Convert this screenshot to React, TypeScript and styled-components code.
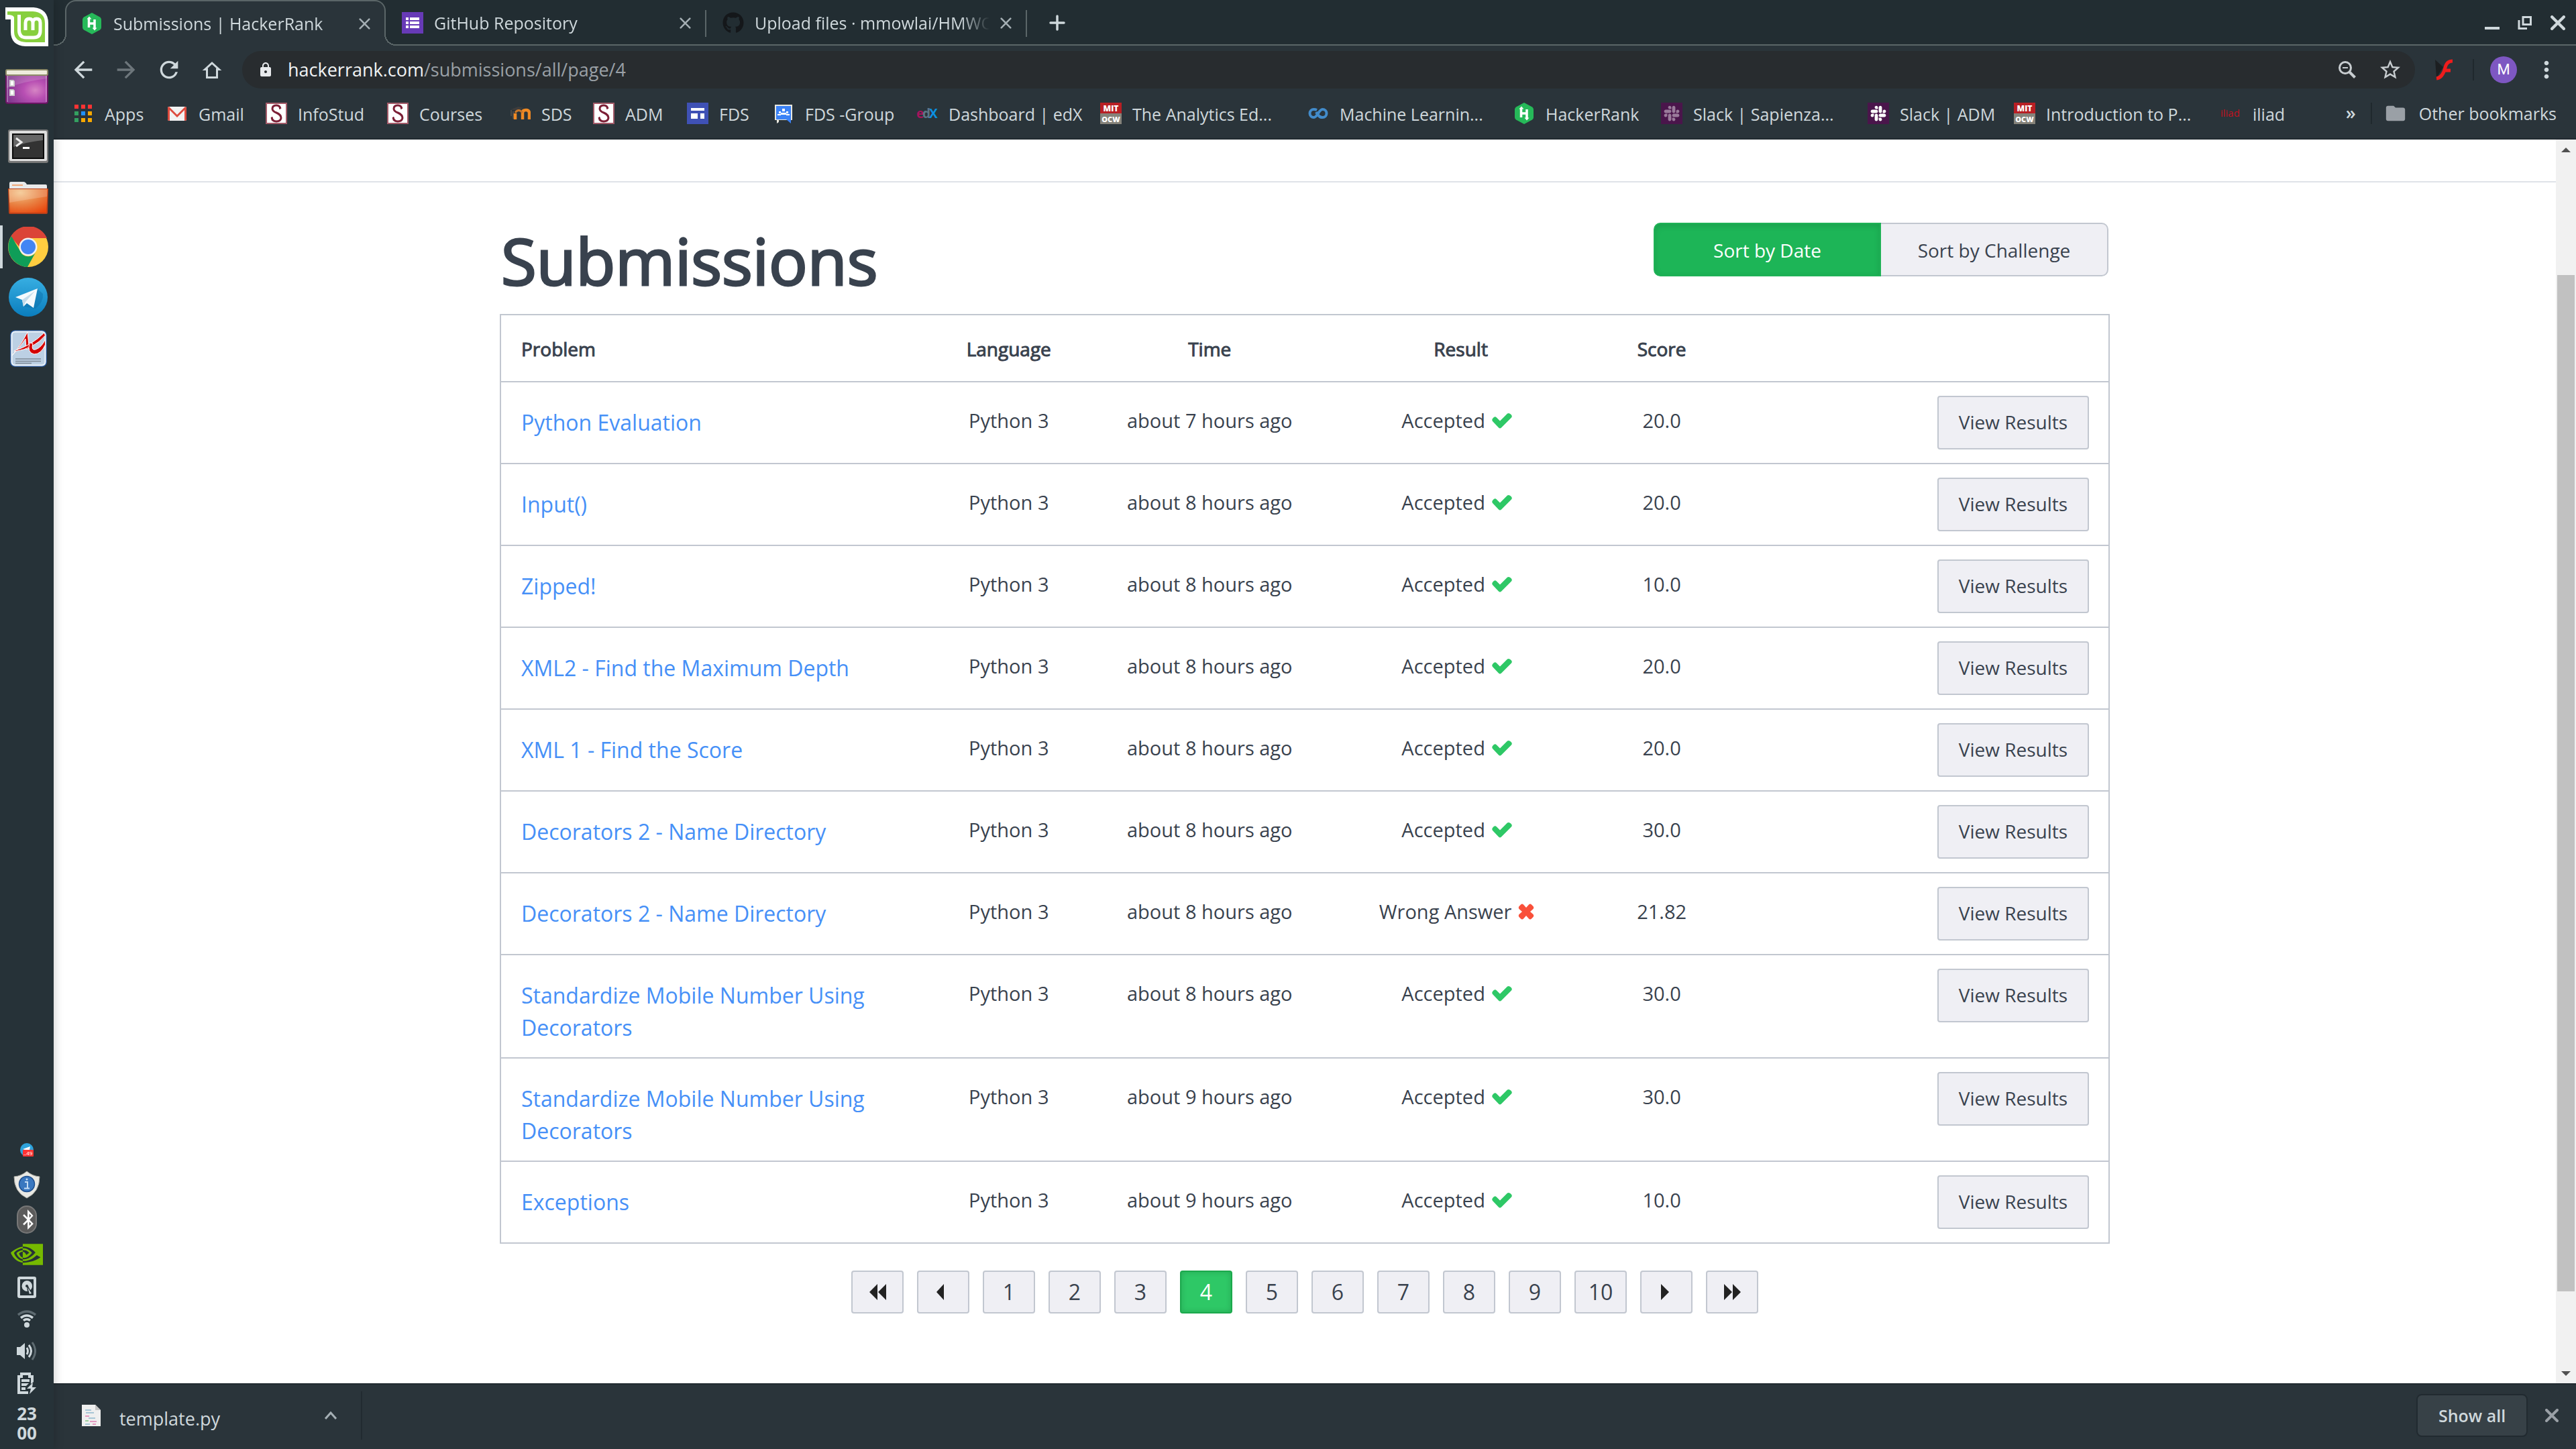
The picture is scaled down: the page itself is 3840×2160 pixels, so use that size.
import React from "react";
import styled, { createGlobalStyle, css } from "styled-components";
import {
  MdArrowBack,
  MdArrowForward,
  MdRefresh,
  MdLock,
  MdStarBorder,
  MdMoreVert,
  MdFolder,
} from "react-icons/md";
import { FaGithub, FaSlack, FaBluetoothB } from "react-icons/fa";
import { SiNvidia } from "react-icons/si";

const c = {
  panel: "#263238",
  strip: "#222d32",
  toolbar: "#2a343a",
  omnibox: "#282c2f",
  line: "#5b6668",
  edge: "#212a30",
  chromeText: "#cfd8dc",
  muted: "#9aa0a6",
  ink: "#39424e",
  border: "#c2c7d0",
  soft: "#efeff4",
  link: "#4690f7",
  green: "#2ec866",
  greenDark: "#1db557",
};

const Global = createGlobalStyle`
  *, *::before, *::after { box-sizing: border-box; }
  body { margin: 0; font-family: "Open Sans", "Noto Sans", sans-serif; background: #fff; }
  button { font: inherit; color: inherit; border: 0; background: none; padding: 0; }
  a { color: inherit; text-decoration: none; }
  svg { display: block; flex: none; }
`;

const Desktop = styled.div`
  display: flex;
  min-height: 100vh;
`;

/* ---------- desktop panel ---------- */

const Panel = styled.nav`
  flex: none;
  width: 80px;
  display: flex;
  flex-direction: column;
  justify-content: space-between;
  background: ${c.panel};
  box-shadow: 0 0 14px rgba(0, 0, 0, 0.22);
  z-index: 1;
`;

const PanelGroup = styled.div`
  display: flex;
  flex-direction: column;
`;

const Slot = styled.button<{ $h: number; $active?: boolean; $inset?: boolean }>`
  height: ${(p) => p.$h}px;
  width: 80px;
  padding-left: ${(p) => (p.$inset ? 4 : 0)}px;
  display: flex;
  align-items: center;
  justify-content: center;
  ${(p) =>
    p.$active &&
    css`
      background: linear-gradient(${c.chromeText}, ${c.chromeText}) 0 50% / 4px 64px no-repeat;
    `}
`;

const Clock = styled.time`
  height: 74px;
  padding-top: 7px;
  text-align: center;
  color: ${c.chromeText};
  font: 700 26px/29px "Noto Sans", sans-serif;
  display: flex;
  flex-direction: column;
`;

/* ---------- browser ---------- */

const Browser = styled.div`
  flex: 1;
  min-width: 0;
  display: flex;
  flex-direction: column;
  color: ${c.chromeText};
  font-size: 25px;
  line-height: 36px;
`;

const TabStrip = styled.div`
  flex: none;
  height: 68px;
  display: flex;
  align-items: stretch;
  padding-left: 17px;
  background: linear-gradient(${c.line}, ${c.line}) 0 100% / 100% 2px no-repeat ${c.strip};
`;

const Tab = styled.div<{ $active?: boolean; $divider?: boolean }>`
  position: relative;
  width: 478px;
  min-width: 0;
  display: flex;
  align-items: center;
  gap: 16px;
  padding: 0 23px 0 24px;
  ${(p) =>
    p.$divider &&
    css`
      background: linear-gradient(${c.line}, ${c.line}) 100% 15px / 2px 40px no-repeat;
    `}
  ${(p) =>
    p.$active &&
    css`
      padding: 0 21px 0 22px;
      background: ${c.toolbar};
      border: 2px solid ${c.line};
      border-bottom: 0;
      border-radius: 16px 16px 0 0;
      &::before,
      &::after {
        content: "";
        position: absolute;
        bottom: 0;
        width: 17px;
        height: 17px;
      }
      &::before {
        left: -17px;
        background: radial-gradient(circle at 0 0, ${c.strip} 15px, ${c.line} 15px 17px, ${c.toolbar} 17px);
      }
      &::after {
        right: -17px;
        background: radial-gradient(circle at 100% 0, ${c.strip} 15px, ${c.line} 15px 17px, ${c.toolbar} 17px);
      }
    `}
`;

const TabTitle = styled.span`
  flex: 1;
  min-width: 0;
  overflow: hidden;
  white-space: nowrap;
  mask-image: linear-gradient(90deg, #000 calc(100% - 44px), transparent);
`;

const TabClose = styled.button`
  width: 17px;
  height: 24px;
  display: grid;
  place-items: center;
  color: #a5afb4;
`;

const NewTab = styled.button`
  padding: 0 33px;
`;

const WindowControls = styled.div`
  margin-left: auto;
  display: flex;
  align-items: center;
  gap: 27px;
  padding-right: 16px;
`;

const Toolbar = styled.div`
  flex: none;
  height: 72px;
  display: flex;
  align-items: center;
  background: ${c.toolbar};
  padding: 0 24px 0 24px;
`;

const NavButton = styled.button<{ $dim?: boolean }>`
  width: 64px;
  height: 56px;
  display: flex;
  align-items: center;
  justify-content: flex-start;
  color: ${(p) => (p.$dim ? "#6d767b" : c.chromeText)};
`;

const Omnibox = styled.form`
  flex: 1;
  min-width: 0;
  height: 56px;
  display: flex;
  align-items: center;
  border-radius: 28px;
  background: ${c.omnibox};
  margin-left: 1px;
  padding: 0 19px 0 23px;
  font-size: 27px;
  color: #f1f3f4;
`;

const Host = styled.label`
  margin-left: 21px;
`;

const Path = styled.input`
  flex: 1;
  min-width: 0;
  border: 0;
  padding: 0;
  background: none;
  outline: none;
  font: inherit;
  color: ${c.muted};
`;

const OmniButton = styled.button`
  width: 64px;
  display: flex;
  justify-content: center;
  color: #c8cdd0;
  &:last-child {
    width: 36px;
    margin-left: 14px;
  }
`;

const ToolbarEnd = styled.div`
  display: flex;
  align-items: center;
  padding-left: 28px;
`;

const FlashButton = styled.button`
  margin-right: 28px;
`;

const Rule = styled.span`
  flex: none;
  width: 2px;
  height: 32px;
  background: #1f282d;
`;

const Avatar = styled.button`
  width: 40px;
  height: 40px;
  margin: 0 24px;
  border-radius: 50%;
  background: #7e57c2;
  color: #fff;
  font: 22px/40px Roboto, sans-serif;
`;

const Bookmarks = styled.div`
  flex: none;
  height: 68px;
  display: flex;
  align-items: center;
  padding: 0 29px 8px 28px;
  background: ${c.toolbar};
  border-bottom: 2px solid ${c.edge};
  white-space: nowrap;
`;

const BookmarkLabel = styled.span`
  padding-top: 2px;
`;

const Bookmark = styled.a<{ $w: number }>`
  flex: 0 1 ${(p) => p.$w}px;
  min-width: 0;
  display: flex;
  align-items: center;
  gap: 16px;
`;

const BookmarkEnd = styled.div`
  margin-left: auto;
  display: flex;
  align-items: center;
  gap: 18px;
`;

const More = styled.button`
  margin-right: 4px;
  padding-bottom: 2px;
  font-size: 27px;
  font-weight: 600;
`;

/* ---------- page ---------- */

const Viewport = styled.div`
  flex: 1;
  display: flex;
  background: #fff;
`;

const Page = styled.main`
  flex: 1;
  min-width: 0;
  padding-top: 62px;
  color: ${c.ink};
  font-size: 28px;
  line-height: 40px;
`;

const PageInner = styled.div`
  border-top: 2px solid #dfe3e8;
  padding-top: 60px;
`;

const Container = styled.div`
  width: 100%;
  max-width: 2400px;
  margin: 0 auto;
`;

const Heading = styled.header`
  display: flex;
  justify-content: space-between;
  align-items: flex-start;
  padding: 0 2px 24px;
`;

const Title = styled.h1`
  margin: 0;
  font-size: 96px;
  line-height: 112px;
  font-weight: 400;
  -webkit-text-stroke: 3px currentColor;
`;

const SortGroup = styled.div`
  display: flex;
`;

const SortButton = styled.button<{ $active?: boolean }>`
  width: 339px;
  height: 80px;
  border: 2px solid ${c.border};
  border-left: 0;
  border-radius: 0 10px 10px 0;
  background: ${c.soft};
  padding-top: 2px;
  ${(p) =>
    p.$active &&
    css`
      border: 2px solid #1fb256;
      border-radius: 10px 0 0 10px;
      background: ${c.greenDark};
      box-shadow: inset 0 3px 10px rgba(0, 0, 0, 0.12);
      color: #fff;
    `}
`;

const Table = styled.table`
  width: 100%;
  table-layout: fixed;
  border: 2px solid ${c.border};
  border-bottom: 0;
  border-collapse: separate;
  border-spacing: 0;
`;

const Col = styled.col<{ $w: string }>`
  width: ${(p) => p.$w};
`;

const Th = styled.th<{ $left?: boolean }>`
  height: 100px;
  padding: 2px 16px 0 ${(p) => (p.$left ? 30 : 32)}px;
  border-bottom: 2px solid ${c.border};
  font-size: 28px;
  font-weight: 400;
  -webkit-text-stroke: 1px currentColor;
  text-align: ${(p) => (p.$left ? "left" : "center")};
`;

const Td = styled.td`
  padding: 37px 16px 19px 32px;
  border-bottom: 2px solid ${c.border};
  vertical-align: top;
  text-align: center;
  font-size: 29px;
`;

const ProblemTd = styled(Td)`
  padding: 36px 16px 20px 30px;
  text-align: left;
  font-size: 32px;
  line-height: 48px;
  color: ${c.link};
`;

const ActionTd = styled(Td)`
  padding: 20px 29px 20px 32px;
  text-align: right;
`;

const ViewButton = styled.a`
  display: inline-block;
  vertical-align: top;
  width: 226px;
  height: 80px;
  padding-top: 17px;
  border: 2px solid ${c.border};
  border-radius: 4px;
  background: ${c.soft};
  text-align: center;
  font-size: 28px;
`;

const Result = styled.span`
  display: inline-flex;
  align-items: center;
  gap: 10px;
  padding-right: 12px;
`;

const Pager = styled.nav`
  display: flex;
  justify-content: center;
  gap: 20px;
  padding: 40px 0;
`;

const PageLink = styled.a<{ $active?: boolean }>`
  width: 78px;
  height: 64px;
  display: grid;
  place-items: center;
  border: 2px solid ${c.border};
  border-radius: 4px;
  background: ${c.soft};
  font-size: 32px;
  ${(p) =>
    p.$active &&
    css`
      border-color: #1ba94c;
      background: ${c.green};
      box-shadow: inset 0 0 8px rgba(0, 0, 0, 0.16);
      color: #fff;
    `}
`;

const Scrollbar = styled.div`
  flex: none;
  width: 30px;
  display: flex;
  flex-direction: column;
  align-items: center;
  background: #f1f1f1;
`;

const ScrollArrow = styled.button`
  width: 30px;
  height: 30px;
  display: grid;
  place-items: center;
`;

const ScrollSpace = styled.span<{ $grow: number; $thumb?: boolean }>`
  flex: ${(p) => p.$grow} 0 0;
  width: 26px;
  background: ${(p) => (p.$thumb ? "#c1c1c1" : "transparent")};
`;

/* ---------- downloads ---------- */

const Shelf = styled.footer`
  flex: none;
  height: 98px;
  display: flex;
  align-items: center;
  padding: 0 26px 4px 42px;
  background: ${c.toolbar};
  border-top: 2px solid ${c.edge};
`;

const Download = styled.button`
  width: 418px;
  height: 72px;
  display: flex;
  align-items: center;
  border-right: 2px solid ${c.edge};
  padding-right: 36px;
  font-size: 27px;
  color: ${c.chromeText};
`;

const FileName = styled.span`
  flex: 1;
  text-align: left;
  padding: 10px 0 0 28px;
`;

const ShowAll = styled.button`
  width: 166px;
  height: 64px;
  margin: 0 26px 0 auto;
  border: 2px solid ${c.edge};
  border-radius: 8px;
  background: #374147;
  font-weight: 600;
`;

const ShelfClose = styled.button`
  color: ${c.muted};
`;

/* ---------- drawings ---------- */

const Cross = ({ size, w = 3 }: { size: number; w?: number }) => (
  <svg width={size} height={size} viewBox="0 0 20 20" stroke="currentColor" strokeWidth={w} strokeLinecap="round">
    <path d="M2 2 18 18M18 2 2 18" />
  </svg>
);

const MintLogo = () => (
  <svg width="64" height="58" viewBox="0 0 64 58">
    <path fill="#fff" d="M0 0H42Q64 2 64 24V58H30Q8 57 8 36V18H0Z" />
    <path fill="#87cf3e" d="M3 6H41Q59 7 59 24V52H31Q13 51 13 36V15Q12 11 3 11Z" />
    <path
      fill="none"
      stroke="#fff"
      strokeWidth="5"
      strokeLinecap="butt"
      d="M20.5 11V35Q21 45 31 45H42Q52 45 52 35V23Q52 17 46.500 17Q41 17 41 23V34M41 23Q41 17 35.500 17Q30 17 30 23V34"
    />
  </svg>
);

const DesktopIcon = () => (
  <svg width="64" height="52" viewBox="0 0 64 52">
    <defs>
      <radialGradient id="desk" cx="0.7" cy="0.6" r="0.7">
        <stop offset="0" stopColor="#d685c4" />
        <stop offset="0.4" stopColor="#b84fb3" />
        <stop offset="1" stopColor="#82388f" />
      </radialGradient>
    </defs>
    <rect x="1" y="2" width="62" height="49" rx="3" fill="url(#desk)" stroke="#6b1464" strokeWidth="2" />
    <path d="M2 10H62V14Q30 18 2 28Z" fill="#fff" opacity=".15" />
    <path d="M3 10V49M61 10V49" stroke="#fff" strokeWidth="2" opacity=".25" />
    <rect x="0" y="0" width="64" height="10" rx="3" fill="#8d8b68" />
    <rect x="2" y="2" width="60" height="6" rx="1" fill="#eeebdc" />
    <path d="M6 16h6l2 2v8H6zM6 30h6l2 2v8H6z" fill="#ccc" />
    <path d="M8 18h4v6H8zM8 32h4v6H8z" fill="#fff" />
  </svg>
);

const TerminalIcon = () => (
  <svg width="60" height="50" viewBox="0 0 60 50">
    <rect width="60" height="50" rx="3" fill="#777" />
    <rect x="2" y="2" width="56" height="45" rx="2" fill="#dedede" />
    <rect x="6" y="6" width="48" height="38" fill="#0a0a0a" />
    <rect x="8" y="8" width="44" height="34" fill="#333" />
    <path d="M8 8H52V16Q30 18 8 26Z" fill="#666" />
    <path d="M12 13l8 6-8 6" fill="none" stroke="#eee" strokeWidth="3" />
    <path d="M22 27.500h10" stroke="#fff" strokeWidth="3" />
  </svg>
);

const FolderIcon = () => (
  <svg width="60" height="48" viewBox="0 0 60 48">
    <defs>
      <radialGradient id="fold" cx="0.3" cy="0.15" r="1">
        <stop offset="0" stopColor="#f3c388" />
        <stop offset="0.5" stopColor="#e98344" />
        <stop offset="1" stopColor="#e8450c" />
      </radialGradient>
    </defs>
    <path d="M2 12V2Q2 0 4 0H23Q26 0 28 4H56Q58 4 58 6V12Z" fill="#e9e9e9" />
    <path d="M6 5h16" stroke="#f0a878" strokeWidth="2" />
    <path d="M0 10H60L59 46Q59 48 57 48H3Q1 48 1 46Z" fill="#b8401a" />
    <path d="M1 11H59L57 46H3Z" fill="url(#fold)" />
    <path d="M2 11H58V22Q30 26 2 31Z" fill="#fff" opacity=".18" />
  </svg>
);

const ChromeIcon = () => (
  <svg width="60" height="60" viewBox="0 0 60 60">
    <circle cx="30" cy="30" r="30" fill="#ffcd40" />
    <path d="M4 15A30 30 0 0 1 58 17H30A13 13 0 0 0 17 30Z" fill="#db4437" />
    <path d="M5 14A30 30 0 0 0 29 60L42 36.500A13 13 0 0 1 18 36Z" fill="#0f9d58" />
    <circle cx="30" cy="30" r="13.500" fill="#f1f1f1" />
    <circle cx="30" cy="30" r="11" fill="#4285f4" />
  </svg>
);

const TelegramIcon = () => (
  <svg width="58" height="58" viewBox="0 0 58 58">
    <defs>
      <linearGradient id="tg" x1="0" y1="0" x2="0" y2="1">
        <stop offset="0" stopColor="#37aee2" />
        <stop offset="1" stopColor="#0a7dbd" />
      </linearGradient>
    </defs>
    <circle cx="29" cy="29" r="29" fill="url(#tg)" />
    <path d="M42 16L51 24Q52 36 40 46L22 43Z" fill="#0a6ca6" opacity=".45" />
    <path d="M10 29L43 16L37 45L27 38L22 43L20 33Z" fill="#f4fafd" />
    <path d="M20 33L39 20L25 36L22 43Z" fill="#c4dcea" />
  </svg>
);

const PdfIcon = () => (
  <svg width="55" height="56" viewBox="0 0 55 56">
    <rect x="1" y="1" width="53" height="53" rx="6" fill="#bcd0e4" stroke="#2d5fa6" strokeWidth="1.500" />
    <rect x="2.500" y="2.500" width="50" height="50" rx="5" fill="none" stroke="#eef4fa" strokeWidth="2" />
    <g fill="#d40000" stroke="#fff" strokeWidth="1">
      <path d="M3 38Q16 23 26 3L28.500 27L24 29L23 13Q14 27 3 38Z" />
      <path d="M6 31Q32 23 51 4L52.500 8Q36 28 6 32Z" />
      <path d="M29 19L34 20Q31 31 38 29Q47 26 52.500 14V22Q46 36 36 36Q25 34 29 19Z" />
    </g>
    <path d="M8 43h38M8 46.500h38M8 49.500h24" stroke="#7f8a96" strokeWidth="1.500" />
  </svg>
);

const TrayTelegram = () => (
  <svg width="20" height="20" viewBox="0 0 20 20">
    <circle cx="10" cy="10" r="10" fill="#2ea3dc" />
    <path d="M4 9L15 5L14 10H7Z" fill="#fff" />
    <rect x="4" y="10" width="16" height="10" rx="1" fill="#f33" />
    <text x="5" y="18" fontSize="8" fill="#fff" fontFamily="Open Sans, sans-serif">
      ..49
    </text>
  </svg>
);

const ShieldIcon = () => (
  <svg width="40" height="42" viewBox="0 0 40 42">
    <path d="M20 1Q28 8 39 9Q39 32 20 41Q1 32 1 9Q12 8 20 1Z" fill="#e9e9e4" stroke="#a9a9a2" strokeWidth="1" />
    <circle cx="20" cy="20" r="11.500" fill="#3a78c0" stroke="#1f4f8d" strokeWidth="1.500" />
    <path d="M17 17h4v9M16 26.500h8" fill="none" stroke="#c4dcf5" strokeWidth="2" />
    <circle cx="20" cy="13" r="1.500" fill="#c4dcf5" />
  </svg>
);

const BluetoothPill = styled.span`
  width: 30px;
  height: 42px;
  display: grid;
  place-items: center;
  border-radius: 15px;
  background: #5b5b5b;
  border: 2px solid #777;
  color: #fff;
  font-size: 30px;
`;

const NvidiaIcon = styled(SiNvidia)`
  width: 48px;
  height: 48px;
  color: #76b900;
`;

const DiskIcon = () => (
  <svg width="28" height="32" viewBox="0 0 28 32" fill={c.chromeText}>
    <path fillRule="evenodd" d="M3 0H25Q28 0 28 3V29Q28 32 25 32H3Q0 32 0 29V3Q0 0 3 0ZM4 4V28H24V4Z" />
    <path d="M14 6a8 8 0 0 1 8 8q0 4-3 6l-3-6a2 2 0 1 0-2 2l1 6a8 8 0 0 1-1-16Z" />
    <path d="M15 16l6 9-3 1z" />
  </svg>
);

const WifiIcon = () => (
  <svg width="28" height="26" viewBox="0 0 28 26" fill="none" strokeWidth="3.500">
    <path d="M1 7Q14-3 27 7" stroke="#5e6b71" />
    <path d="M5 11.500Q14 4.500 23 11.500M9 15.500Q14 11.500 19 15.500" stroke={c.chromeText} />
    <circle cx="14" cy="22" r="4" fill={c.chromeText} />
  </svg>
);

const VolumeIcon = () => (
  <svg width="30" height="28" viewBox="0 0 30 28" fill="none">
    <path d="M0 8H5L12 2V26L5 20H0Z" fill={c.chromeText} />
    <path d="M15 9Q18 14 15 19M18 5Q25 14 18 23" stroke={c.chromeText} strokeWidth="3" />
    <path d="M23 1Q32 14 23 27" stroke="#5e6b71" strokeWidth="3" />
  </svg>
);

const BatteryIcon = () => (
  <svg width="28" height="32" viewBox="0 0 28 32" fill={c.chromeText}>
    <path d="M0 4H4V0H20V4H24V14L20 17V8H16V4H8V8H4V28H16V32H0Z" />
    <path d="M6 10H18V14H6zM6 16H17L13 20H6zM6 22H12V26H6z" />
    <path d="M23 15L14 24H20L18 32L28 22H22Z" />
  </svg>
);

const HackerRankIcon = () => (
  <svg width="32" height="32" viewBox="0 0 32 32">
    <path d="M16 0L28 6.500Q30 8 30 10V22Q30 24 28 25.500L16 32L4 25.500Q2 24 2 22V10Q2 8 4 6.500Z" fill="#26b959" />
    <path d="M11.500 8V22M20 10V24M11.500 16H20" stroke="#fff" strokeWidth="3.500" />
    <path d="M8.500 9.500L12 5.500L15.500 9.500ZM16.500 22.500L20 26.500L23.500 22.500Z" fill="#fff" />
  </svg>
);

const FormsIcon = () => (
  <svg width="32" height="32" viewBox="0 0 32 32">
    <rect width="32" height="32" fill="#673ab7" />
    <path d="M6 8h4v4H6zM12 8h14v4H12zM6 14h4v4H6zM12 14h14v4H12zM6 20h4v4H6zM12 20h14v4H12z" fill="#fff" />
  </svg>
);

const AppsIcon = () => {
  const cells = ["#f33", "#f33", "#f33", "#34a060", "#2090f8", "#f8a800", "#34a060", "#f8a800", "#f8a800"];
  return (
    <svg width="32" height="32" viewBox="0 0 32 32">
      {cells.map((fill, i) => (
        <rect key={i} x={3 + (i % 3) * 10} y={3 + Math.floor(i / 3) * 10} width="6" height="6" fill={fill} />
      ))}
    </svg>
  );
};

const GmailIcon = () => (
  <svg width="32" height="32" viewBox="0 0 32 32">
    <rect x="2" y="6" width="28" height="21" rx="2" fill="#f2f2f2" />
    <path d="M2 8Q2 6 4 6L16 18L28 6Q30 6 30 8V25Q30 27 28 27H27V11L16 22L5 11V27H4Q2 27 2 25Z" fill="#dd4b3e" />
  </svg>
);

const SapienzaIcon = () => (
  <svg width="32" height="32" viewBox="0 0 32 32">
    <rect x="1" y="1" width="30" height="30" fill="#fff" stroke="#a45b69" strokeWidth="2" />
    <path d="M22 9Q21 4 16 4Q10 4 10 9Q10 13 16 15Q23 18 23 23Q22 28 16 28Q10 28 9 22" fill="none" stroke="#7c1f36" strokeWidth="3" />
    <path d="M21 5V10M9.500 21V27" stroke="#7c1f36" strokeWidth="1.500" />
  </svg>
);

const MoodleIcon = () => (
  <svg width="32" height="32" viewBox="0 0 32 32" fill="none">
    <path d="M2 10L14 6L22 8L12 12Z" fill="#3d3d3d" />
    <path d="M3 11V20M6 13V24" stroke="#4a4a4a" strokeWidth="2" />
    <path d="M9 25V16M20 25V15Q20 11 25 11Q30 11 30 16V25" stroke="#f08a24" strokeWidth="4.500" />
    <path d="M9 15Q14 8 20 15" stroke="#c9772a" strokeWidth="3" />
  </svg>
);

const SitesIcon = () => (
  <svg width="32" height="32" viewBox="0 0 32 32">
    <rect width="32" height="32" fill="#3f51b5" />
    <path d="M6 8H26V12H6zM6 16H16V24H6zM20 16H26V24H20z" fill="#fff" />
  </svg>
);

const GroupIcon = () => (
  <svg width="32" height="32" viewBox="0 0 32 32">
    <path d="M3 3H29V26H9V29L6 31V26H3Z" fill="#e8e8e0" />
    <path d="M5 5H27V31L20 25H5Z" fill="#3b82f6" />
    <path d="M14 9h4v4h-4zM9 13h3v3H9zM20 13h3v3h-3zM12 15h8v3h-8zM7 17h5v2H7zM20 17h5v2h-5z" fill="#fff" />
  </svg>
);

const EdxIcon = () => (
  <svg width="32" height="32" viewBox="0 0 32 32" fontFamily="Open Sans, sans-serif" fontWeight="700" fontSize="19">
    <text x="0" y="23" fill="#a5145c">e</text>
    <text x="9" y="23" fill="#5c7687">d</text>
    <text x="19" y="23" fill="#0c90e0">X</text>
  </svg>
);

const OcwIcon = () => (
  <svg width="32" height="32" viewBox="0 0 32 32" fontFamily="Open Sans, sans-serif" fontWeight="800" fontSize="12" fill="#fff" textAnchor="middle">
    <rect width="32" height="16" fill="#b81f24" />
    <rect y="16" width="32" height="16" fill="#85837a" />
    <text x="16" y="13">MIT</text>
    <text x="16" y="29" fontSize="11">OCW</text>
  </svg>
);

const CourseraIcon = () => (
  <svg width="32" height="32" viewBox="0 0 32 32" fill="none" stroke="#428bca" strokeWidth="4">
    <path d="M14 11Q12 10 9.500 10A6 6 0 0 0 9.500 22C15 22 17 10 22.500 10A6 6 0 0 1 22.500 22Q20 22 18 21" />
    <path d="M13 14Q17 22 22 22" />
  </svg>
);

const SlackTile = styled.span<{ $dim?: boolean }>`
  flex: none;
  width: 32px;
  height: 32px;
  display: grid;
  place-items: center;
  background: #4a154b;
  color: ${(p) => (p.$dim ? "#9a7b9b" : "#fff")};
  font-size: 26px;
`;

const IliadIcon = () => (
  <svg width="32" height="32" viewBox="0 0 32 32">
    <text x="0" y="21" fontSize="15" fill="#c1121f" fontFamily="Open Sans, sans-serif">iliad</text>
  </svg>
);

const HomeIcon = () => (
  <svg width="40" height="28" viewBox="-7 0 40 28" fill="none" stroke="currentColor" strokeWidth="3">
    <path d="M2.500 13.500L13 4L23.500 13.500H20.500V25.500H5.500V13.500Z" />
  </svg>
);

const ZoomOutIcon = () => (
  <svg width="28" height="28" viewBox="0 0 28 28" fill="none" stroke="currentColor" strokeWidth="3">
    <circle cx="11" cy="11" r="8.500" />
    <path d="M17 17L25.500 25.500" strokeWidth="4" />
    <path d="M7 11H15" strokeWidth="2" />
  </svg>
);

const PlusIcon = () => (
  <svg width="24" height="24" viewBox="0 0 24 24" stroke={c.chromeText} strokeWidth="3.500" strokeLinecap="round">
    <path d="M12 2V22M2 12H22" />
  </svg>
);

const FlashIcon = () => (
  <svg width="30" height="32" viewBox="0 0 30 32" fill="none">
    <path d="M2 1L14 12L4 28Z" fill="#1c1f21" />
    <path d="M28 3Q19 3 17 13Q13 28 4 29M14 17H25" stroke="#ee1c1c" strokeWidth="5" />
  </svg>
);

const MinimizeIcon = () => (
  <svg width="22" height="22" viewBox="0 0 22 22">
    <rect y="17" width="22" height="4" fill={c.chromeText} />
  </svg>
);

const RestoreIcon = () => (
  <svg width="22" height="22" viewBox="0 0 22 22" fill="none" stroke={c.chromeText} strokeWidth="3">
    <path d="M8 2.500H19.500V13.500H8ZM2 7V19.500H14" />
  </svg>
);

const FileIcon = () => (
  <svg width="28" height="32" viewBox="0 0 28 32">
    <path d="M0 0H20L28 8V32H0Z" fill="#efefef" />
    <path d="M20 0V8H28Z" fill="#c4c4c4" />
    <path d="M5 8h9M6 12h12M10 20h10M5 29h7" stroke="#a8c6d6" strokeWidth="2" />
    <path d="M5 17h6M12 25h10M16 29h5" stroke="#e39ac0" strokeWidth="2" />
    <path d="M5 24h5" stroke="#9ccf9c" strokeWidth="2" />
  </svg>
);

const ChevronUp = () => (
  <svg width="18" height="12" viewBox="0 0 18 12" fill="none" stroke="#a5afb4" strokeWidth="3">
    <path d="M1 11L9 2L17 11" />
  </svg>
);

const CheckIcon = () => (
  <svg width="30" height="24" viewBox="0 0 30 24" role="img" aria-label="Accepted">
    <path fill={c.green} d="M1 9Q4 4.500 7 7.500L12 12.500L23 1.500Q25.500 0 28 2.500Q31 5 29 7.500L14 22.500Q12 24.500 10 22.500L1 13Q-.5 11 1 9Z" />
  </svg>
);

const WrongIcon = () => (
  <svg width="24" height="24" viewBox="0 0 24 24" role="img" aria-label="Wrong">
    <path
      fill="#f9503a"
      d="M4 1.500Q6-.5 8 1.500L12 6L16 1.500Q18-.5 20 1.500L22.500 4Q24 6 22.500 8L18 12L22.500 16Q24 18 22.500 20L20 22.500Q18 24.500 16 22.500L12 18L8 22.500Q6 24.500 4 22.500L1.500 20Q0 18 1.500 16L6 12L1.500 8Q0 6 1.500 4Z"
    />
  </svg>
);

const arrowPaths = {
  first: "M13 0V24L1 12ZM26 0V24L14 12Z",
  previous: "M14 0V24L3 12Z",
  next: "M5 0V24L17 12Z",
  last: "M1 0V24L13 12ZM14 0V24L26 12Z",
};

const Arrow = ({ kind }: { kind: keyof typeof arrowPaths }) => (
  <svg width="26" height="24" viewBox="0 0 26 24" fill="#222">
    <path d={arrowPaths[kind]} />
  </svg>
);

const Triangle = ({ down }: { down?: boolean }) => (
  <svg width="14" height="7" viewBox="0 0 14 7" fill="#505050">
    <path d={down ? "M0 0H14L7 7Z" : "M0 7H14L7 0Z"} />
  </svg>
);

/* ---------- data ---------- */

const bookmarks: { label: string; width: number; icon: React.ReactNode }[] = [
  { label: "Apps", width: 140, icon: <AppsIcon /> },
  { label: "Gmail", width: 148, icon: <GmailIcon /> },
  { label: "InfoStud", width: 181, icon: <SapienzaIcon /> },
  { label: "Courses", width: 182, icon: <SapienzaIcon /> },
  { label: "SDS", width: 125, icon: <MoodleIcon /> },
  { label: "ADM", width: 140, icon: <SapienzaIcon /> },
  { label: "FDS", width: 128, icon: <SitesIcon /> },
  { label: "FDS -Group", width: 214, icon: <GroupIcon /> },
  { label: "Dashboard | edX", width: 274, icon: <EdxIcon /> },
  { label: "The Analytics Ed...", width: 309, icon: <OcwIcon /> },
  { label: "Machine Learnin...", width: 307, icon: <CourseraIcon /> },
  { label: "HackerRank", width: 220, icon: <HackerRankIcon /> },
  { label: "Slack | Sapienza...", width: 308, icon: <SlackTile $dim><FaSlack /></SlackTile> },
  { label: "Slack | ADM", width: 218, icon: <SlackTile><FaSlack /></SlackTile> },
  { label: "Introduction to P...", width: 308, icon: <OcwIcon /> },
  { label: "iliad", width: 110, icon: <IliadIcon /> },
];

const submissions = [
  { problem: "Python Evaluation", time: "about 7 hours ago", ok: true, score: "20.0" },
  { problem: "Input()", time: "about 8 hours ago", ok: true, score: "20.0" },
  { problem: "Zipped!", time: "about 8 hours ago", ok: true, score: "10.0" },
  { problem: "XML2 - Find the Maximum Depth", time: "about 8 hours ago", ok: true, score: "20.0" },
  { problem: "XML 1 - Find the Score", time: "about 8 hours ago", ok: true, score: "20.0" },
  { problem: "Decorators 2 - Name Directory", time: "about 8 hours ago", ok: true, score: "30.0" },
  { problem: "Decorators 2 - Name Directory", time: "about 8 hours ago", ok: false, score: "21.82" },
  { problem: "Standardize Mobile Number Using Decorators", time: "about 8 hours ago", ok: true, score: "30.0" },
  { problem: "Standardize Mobile Number Using Decorators", time: "about 9 hours ago", ok: true, score: "30.0" },
  { problem: "Exceptions", time: "about 9 hours ago", ok: true, score: "10.0" },
];

const pages = [1, 2, 3, 4, 5, 6, 7, 8, 9, 10];
const currentPage = 4;

const launchers = [
  { name: "Menu", h: 80, icon: <MintLogo /> },
  { name: "Show desktop", h: 98, icon: <DesktopIcon /> },
  { name: "Terminal", h: 80, icon: <TerminalIcon />, inset: true },
  { name: "Files", h: 74, icon: <FolderIcon />, inset: true },
  { name: "Chrome", h: 72, icon: <ChromeIcon />, inset: true, active: true },
  { name: "Telegram", h: 78, icon: <TelegramIcon />, inset: true },
  { name: "PDF reader", h: 76, icon: <PdfIcon />, inset: true },
];

const tray = [
  { name: "Telegram", h: 52, icon: <TrayTelegram /> },
  { name: "Updates", h: 52, icon: <ShieldIcon /> },
  { name: "Bluetooth", h: 52, icon: <BluetoothPill><FaBluetoothB /></BluetoothPill> },
  { name: "Nvidia", h: 52, icon: <NvidiaIcon /> },
  { name: "Disks", h: 46, icon: <DiskIcon /> },
  { name: "Network", h: 48, icon: <WifiIcon /> },
  { name: "Volume", h: 48, icon: <VolumeIcon /> },
  { name: "Battery", h: 48, icon: <BatteryIcon /> },
];

export default function App() {
  return (
    <Desktop>
      <Global />
      <Panel>
        <PanelGroup>
          {launchers.map((l) => (
            <Slot key={l.name} $h={l.h} $active={l.active} $inset={l.inset} aria-label={l.name}>
              {l.icon}
            </Slot>
          ))}
        </PanelGroup>
        <PanelGroup>
          {tray.map((t) => (
            <Slot key={t.name} $h={t.h} aria-label={t.name}>
              {t.icon}
            </Slot>
          ))}
          <Clock>
            <span>23</span>
            <span>00</span>
          </Clock>
        </PanelGroup>
      </Panel>

      <Browser>
        <TabStrip>
          <Tab $active>
            <HackerRankIcon />
            <TabTitle>Submissions | HackerRank</TabTitle>
            <TabClose aria-label="Close tab"><Cross size={17} /></TabClose>
          </Tab>
          <Tab $divider>
            <FormsIcon />
            <TabTitle>GitHub Repository</TabTitle>
            <TabClose aria-label="Close tab"><Cross size={17} /></TabClose>
          </Tab>
          <Tab $divider>
            <FaGithub size={32} color="#14171a" />
            <TabTitle>Upload files · mmowlai/HMWO</TabTitle>
            <TabClose aria-label="Close tab"><Cross size={17} /></TabClose>
          </Tab>
          <NewTab aria-label="New tab"><PlusIcon /></NewTab>
          <WindowControls>
            <button aria-label="Minimize"><MinimizeIcon /></button>
            <button aria-label="Restore"><RestoreIcon /></button>
            <button aria-label="Close"><Cross size={22} w={4} /></button>
          </WindowControls>
        </TabStrip>

        <Toolbar>
          <NavButton aria-label="Back"><MdArrowBack size={40} /></NavButton>
          <NavButton aria-label="Forward" $dim><MdArrowForward size={40} /></NavButton>
          <NavButton aria-label="Reload"><MdRefresh size={40} /></NavButton>
          <NavButton aria-label="Home"><HomeIcon /></NavButton>
          <Omnibox>
            <MdLock size={24} color="#e8eaed" />
            <Host htmlFor="path">hackerrank.com</Host>
            <Path id="path" defaultValue="/submissions/all/page/4" />
            <OmniButton type="button" aria-label="Zoom"><ZoomOutIcon /></OmniButton>
            <OmniButton type="button" aria-label="Bookmark"><MdStarBorder size={36} /></OmniButton>
          </Omnibox>
          <ToolbarEnd>
            <FlashButton aria-label="Flash"><FlashIcon /></FlashButton>
            <Rule />
            <Avatar>M</Avatar>
            <button aria-label="Menu"><MdMoreVert size={40} /></button>
          </ToolbarEnd>
        </Toolbar>

        <Bookmarks>
          {bookmarks.map((b) => (
            <Bookmark key={b.label} href="#" $w={b.width}>
              {b.icon}
              <BookmarkLabel>{b.label}</BookmarkLabel>
            </Bookmark>
          ))}
          <BookmarkEnd>
            <More aria-label="More bookmarks">»</More>
            <Rule />
            <MdFolder size={34} color="#9aa0a6" />
            <a href="#"><BookmarkLabel>Other bookmarks</BookmarkLabel></a>
          </BookmarkEnd>
        </Bookmarks>

        <Viewport>
          <Page>
            <PageInner>
              <Container>
                <Heading>
                  <Title>Submissions</Title>
                  <SortGroup>
                    <SortButton $active>Sort by Date</SortButton>
                    <SortButton>Sort by Challenge</SortButton>
                  </SortGroup>
                </Heading>
                <Table>
                  <colgroup>
                    <Col $w="25%" />
                    <Col $w="12.5%" />
                    <Col $w="12.5%" />
                    <Col $w="18.75%" />
                    <Col $w="6.25%" />
                    <Col $w="25%" />
                  </colgroup>
                  <thead>
                    <tr>
                      <Th $left>Problem</Th>
                      <Th>Language</Th>
                      <Th>Time</Th>
                      <Th>Result</Th>
                      <Th>Score</Th>
                      <Th />
                    </tr>
                  </thead>
                  <tbody>
                    {submissions.map((s, i) => (
                      <tr key={i}>
                        <ProblemTd><a href="#">{s.problem}</a></ProblemTd>
                        <Td>Python 3</Td>
                        <Td>{s.time}</Td>
                        <Td>
                          <Result>
                            {s.ok ? "Accepted" : "Wrong Answer"}
                            {s.ok ? <CheckIcon /> : <WrongIcon />}
                          </Result>
                        </Td>
                        <Td>{s.score}</Td>
                        <ActionTd><ViewButton href="#">View Results</ViewButton></ActionTd>
                      </tr>
                    ))}
                  </tbody>
                </Table>
                <Pager aria-label="Pages">
                  <PageLink href="#" aria-label="First"><Arrow kind="first" /></PageLink>
                  <PageLink href="#" aria-label="Previous"><Arrow kind="previous" /></PageLink>
                  {pages.map((p) => (
                    <PageLink key={p} href="#" $active={p === currentPage}>{p}</PageLink>
                  ))}
                  <PageLink href="#" aria-label="Next"><Arrow kind="next" /></PageLink>
                  <PageLink href="#" aria-label="Last"><Arrow kind="last" /></PageLink>
                </Pager>
              </Container>
            </PageInner>
          </Page>
          <Scrollbar>
            <ScrollArrow aria-label="Scroll up"><Triangle /></ScrollArrow>
            <ScrollSpace $grow={172} />
            <ScrollSpace $grow={1515} $thumb />
            <ScrollSpace $grow={107} />
            <ScrollArrow aria-label="Scroll down"><Triangle down /></ScrollArrow>
          </Scrollbar>
        </Viewport>

        <Shelf>
          <Download>
            <FileIcon />
            <FileName>template.py</FileName>
            <ChevronUp />
          </Download>
          <ShowAll>Show all</ShowAll>
          <ShelfClose aria-label="Close downloads"><Cross size={20} w={4} /></ShelfClose>
        </Shelf>
      </Browser>
    </Desktop>
  );
}
